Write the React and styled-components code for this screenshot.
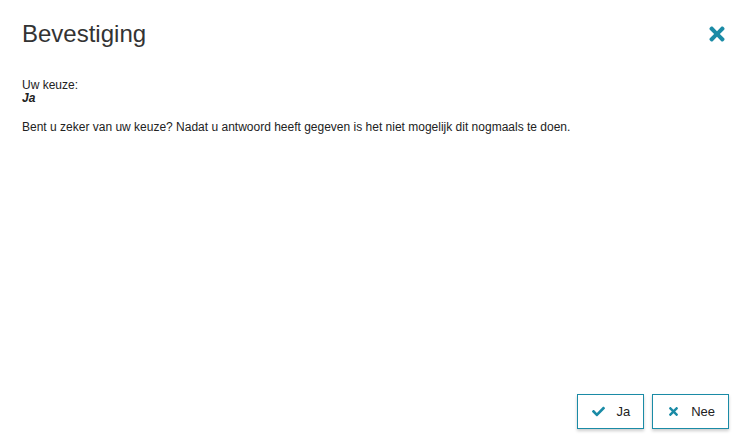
import React from "react";
import styled, { createGlobalStyle } from "styled-components";
import { FaCheck, FaTimes } from "react-icons/fa";

const GlobalStyle = createGlobalStyle`
  html, body {
    margin: 0;
    padding: 0;
    background: #ffffff;
  }
  body {
    font-family: "Liberation Sans", Arial, sans-serif;
    color: #222222;
  }
`;

const Dialog = styled.div`
  height: 100vh;
  box-sizing: border-box;
  display: flex;
  flex-direction: column;
  padding: 20px 18px 17px 22px;
`;

const Header = styled.div`
  display: flex;
  align-items: center;
  justify-content: space-between;
`;

const Title = styled.h1`
  margin: 0;
  font-size: 24px;
  font-weight: normal;
  line-height: 27px;
  color: #333333;
`;

const CloseButton = styled.button`
  border: none;
  background: none;
  padding: 0;
  margin-right: 1px;
  display: flex;
  color: #1a8ba6;
  cursor: pointer;
`;

const Body = styled.div`
  flex: 1;
  padding-top: 32px;
  font-size: 12px;
  line-height: 13px;
`;

const Label = styled.div``;

const Choice = styled.div`
  font-weight: bold;
  font-style: italic;
`;

const Question = styled.p`
  margin: 16px 0 0;
`;

const Footer = styled.div`
  display: flex;
  justify-content: flex-end;
  gap: 8px;
`;

const Button = styled.button`
  height: 35px;
  box-sizing: border-box;
  display: flex;
  align-items: center;
  gap: 11px;
  padding: 0 13px 0 14px;
  border: 1px solid #1a8ba6;
  background: #ffffff;
  box-shadow: 0 2px 3px rgba(0, 0, 0, 0.2);
  font-family: "Liberation Sans", Arial, sans-serif;
  font-size: 13px;
  color: #222222;
  cursor: pointer;

  svg {
    flex: none;
    color: #1a8ba6;
  }
`;

export default function App() {
  return (
    <>
      <GlobalStyle />
      <Dialog>
        <Header>
          <Title>Bevestiging</Title>
          <CloseButton aria-label="Sluiten">
            <FaTimes size={22} />
          </CloseButton>
        </Header>
        <Body>
          <Label>Uw keuze:</Label>
          <Choice>Ja</Choice>
          <Question>
            Bent u zeker van uw keuze? Nadat u antwoord heeft gegeven is het
            niet mogelijk dit nogmaals te doen.
          </Question>
        </Body>
        <Footer>
          <Button>
            <FaCheck size={13} />
            Ja
          </Button>
          <Button>
            <FaTimes size={13} />
            Nee
          </Button>
        </Footer>
      </Dialog>
    </>
  );
}
